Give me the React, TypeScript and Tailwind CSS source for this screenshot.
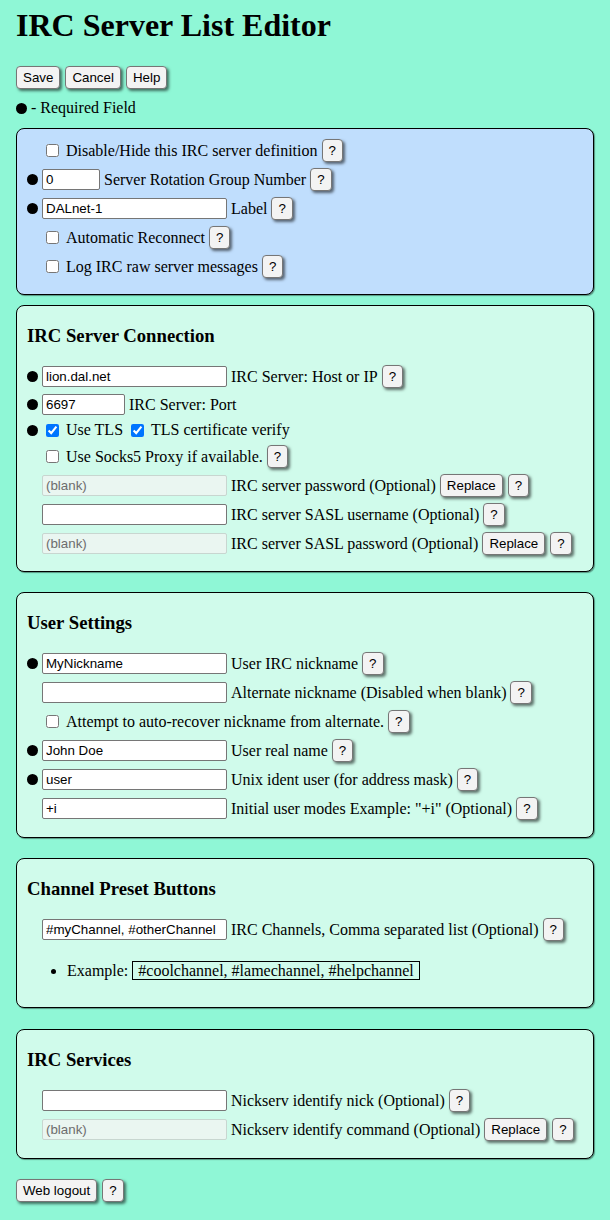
import React from "react";

const sans = "font-['Liberation_Sans',Arial,sans-serif]";

function Btn({ children }: { children: React.ReactNode }) {
    return (
        <button
            type="button"
            className={`${sans} h-[23px] shrink-0 px-[6px] border border-[#767676] rounded-[4px] bg-[#f3f3f3] text-[13.33px] leading-none text-black shadow-[2px_2px_3px_rgba(0,0,0,0.55)]`}
        >
            {children}
        </button>
    );
}

function Help() {
    return <Btn>?</Btn>;
}

function Dot() {
    return <span className="block w-[11px] h-[11px] rounded-full bg-black" />;
}

function Field({
    value = "",
    width = "w-[185px]",
    disabled = false,
}: {
    value?: string;
    width?: string;
    disabled?: boolean;
}) {
    const look = disabled
        ? "bg-[#eaf6f1] border-[#c8d6d0] text-[#6d6d6d]"
        : "bg-white border-[#767676] text-black";
    return (
        <input
            type="text"
            readOnly
            defaultValue={value}
            className={`${sans} ${width} ${look} h-[21px] shrink-0 border rounded-[2px] px-[3px] text-[13.33px] outline-none`}
        />
    );
}

function Check({ on = false }: { on?: boolean }) {
    return (
        <input
            type="checkbox"
            defaultChecked={on}
            className="w-[13px] h-[13px] shrink-0 ml-[4px] mr-[7px]"
        />
    );
}

function Row({
    req = false,
    h = "h-[29px]",
    children,
}: {
    req?: boolean;
    h?: string;
    children: React.ReactNode;
}) {
    return (
        <div className={`${h} flex items-center whitespace-nowrap`}>
            <div className="w-[15px] shrink-0">{req && <Dot />}</div>
            {children}
        </div>
    );
}

function Label({ children }: { children: React.ReactNode }) {
    return <span className="ml-[4px] mr-[4px]">{children}</span>;
}

function Panel({
    title,
    blue = false,
    pb = "pb-[13px]",
    children,
}: {
    title?: string;
    blue?: boolean;
    pb?: string;
    children: React.ReactNode;
}) {
    return (
        <section
            className={`${blue ? "bg-[#c0defd]" : "bg-[#d0fbeb]"} ${pb} border border-black rounded-[8px] px-[10px] pt-[7px] shadow-[1px_1px_1px_rgba(0,0,0,0.4)]`}
        >
            {title && (
                <h3 className="pt-[12px] pb-[15px] text-[18.72px] leading-[22px] font-bold">
                    {title}
                </h3>
            )}
            {children}
        </section>
    );
}

export default function App() {
    return (
        <div className="min-h-[1220px] bg-[#8ff7d6] px-[16px] pt-[7px] pb-[19px] font-['Liberation_Serif','Times_New_Roman',serif] text-[16px] text-black">
            <h1 className="text-[32px] leading-[37px] font-bold">IRC Server List Editor</h1>

            <div className="mt-[22px] flex gap-[5px]">
                <Btn>Save</Btn>
                <Btn>Cancel</Btn>
                <Btn>Help</Btn>
            </div>

            <div className="mt-[10px] h-[18px] flex items-center gap-[4px]">
                <Dot />
                <span>- Required Field</span>
            </div>

            <div className="mt-[11px]">
                <Panel blue>
                    <Row>
                        <Check />
                        <span className="mr-[4px]">Disable/Hide this IRC server definition</span>
                        <Help />
                    </Row>
                    <Row req>
                        <Field value="0" width="w-[58px]" />
                        <Label>Server Rotation Group Number</Label>
                        <Help />
                    </Row>
                    <Row req>
                        <Field value="DALnet-1" />
                        <Label>Label</Label>
                        <Help />
                    </Row>
                    <Row>
                        <Check />
                        <span className="mr-[4px]">Automatic Reconnect</span>
                        <Help />
                    </Row>
                    <Row>
                        <Check />
                        <span className="mr-[4px]">Log IRC raw server messages</span>
                        <Help />
                    </Row>
                </Panel>
            </div>

            <div className="mt-[10px]">
                <Panel title="IRC Server Connection">
                    <Row req>
                        <Field value="lion.dal.net" />
                        <Label>IRC Server: Host or IP</Label>
                        <Help />
                    </Row>
                    <Row req h="h-[27px]">
                        <Field value="6697" width="w-[83px]" />
                        <Label>IRC Server: Port</Label>
                    </Row>
                    <Row req h="h-[24px]">
                        <Check on />
                        <span className="mr-[4px]">Use TLS</span>
                        <Check on />
                        <span>TLS certificate verify</span>
                    </Row>
                    <Row>
                        <Check />
                        <span className="mr-[4px]">Use Socks5 Proxy if available.</span>
                        <Help />
                    </Row>
                    <Row>
                        <Field value="(blank)" disabled />
                        <Label>IRC server password (Optional)</Label>
                        <div className="flex gap-[5px]">
                            <Btn>Replace</Btn>
                            <Help />
                        </div>
                    </Row>
                    <Row>
                        <Field />
                        <Label>IRC server SASL username (Optional)</Label>
                        <Help />
                    </Row>
                    <Row>
                        <Field value="(blank)" disabled />
                        <Label>IRC server SASL password (Optional)</Label>
                        <div className="flex gap-[5px]">
                            <Btn>Replace</Btn>
                            <Help />
                        </div>
                    </Row>
                </Panel>
            </div>

            <div className="mt-[20px]">
                <Panel title="User Settings" pb="pb-[14px]">
                    <Row req>
                        <Field value="MyNickname" />
                        <Label>User IRC nickname</Label>
                        <Help />
                    </Row>
                    <Row>
                        <Field />
                        <Label>Alternate nickname (Disabled when blank)</Label>
                        <Help />
                    </Row>
                    <Row>
                        <Check />
                        <span className="mr-[4px]">Attempt to auto-recover nickname from alternate.</span>
                        <Help />
                    </Row>
                    <Row req>
                        <Field value="John Doe" />
                        <Label>User real name</Label>
                        <Help />
                    </Row>
                    <Row req>
                        <Field value="user" />
                        <Label>Unix ident user (for address mask)</Label>
                        <Help />
                    </Row>
                    <Row>
                        <Field value="+i" />
                        <Label>Initial user modes Example: "+i" (Optional)</Label>
                        <Help />
                    </Row>
                </Panel>
            </div>

            <div className="mt-[20px]">
                <Panel title="Channel Preset Buttons">
                    <Row>
                        <Field value="#myChannel, #otherChannel" />
                        <Label>IRC Channels, Comma separated list (Optional)</Label>
                        <Help />
                    </Row>
                    <ul className="mt-[16px] mb-[12px] pl-[40px] list-disc">
                        <li className="leading-[22px]">
                            Example:{" "}
                            <span className="inline-block border border-black px-[5px] leading-[17px]">
                                #coolchannel, #lamechannel, #helpchannel
                            </span>
                        </li>
                    </ul>
                </Panel>
            </div>

            <div className="mt-[21px]">
                <Panel title="IRC Services" pb="pb-[14px]">
                    <Row>
                        <Field />
                        <Label>Nickserv identify nick (Optional)</Label>
                        <Help />
                    </Row>
                    <Row>
                        <Field value="(blank)" disabled />
                        <Label>Nickserv identify command (Optional)</Label>
                        <div className="flex gap-[5px]">
                            <Btn>Replace</Btn>
                            <Help />
                        </div>
                    </Row>
                </Panel>
            </div>

            <div className="mt-[20px] flex gap-[5px]">
                <Btn>Web logout</Btn>
                <Help />
            </div>
        </div>
    );
}
